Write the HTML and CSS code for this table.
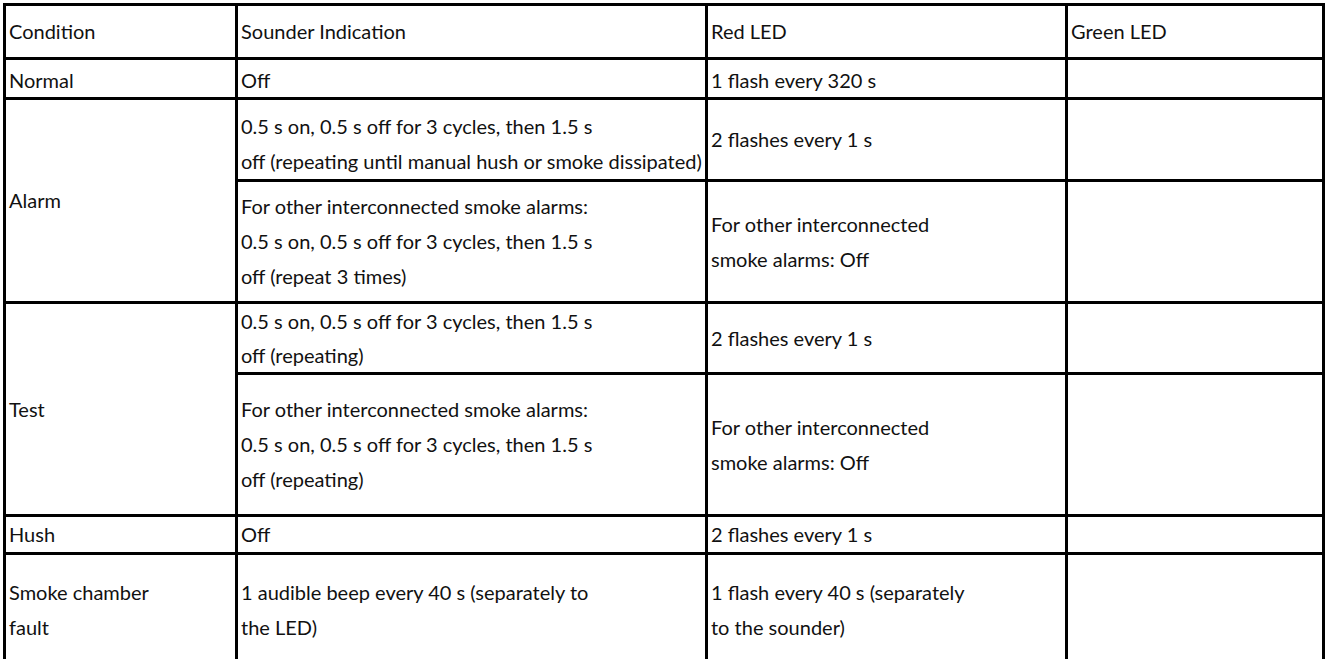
FILE: index.html
```html
<!DOCTYPE html>
<html lang="en">
<head>
<meta charset="utf-8">
<title>Smoke alarm indications</title>
<link rel="stylesheet" href="styles.css">
</head>
<body>
<table class="spec">
  <colgroup>
    <col class="c-cond">
    <col class="c-sound">
    <col class="c-red">
    <col class="c-green">
  </colgroup>
  <tbody>
    <tr class="r-head">
      <td>Condition</td>
      <td>Sounder Indication</td>
      <td>Red LED</td>
      <td>Green LED</td>
    </tr>
    <tr class="r-normal">
      <td>Normal</td>
      <td>Off</td>
      <td>1 flash every 320 s</td>
      <td></td>
    </tr>
    <tr class="r-alarm1">
      <td rowspan="2">Alarm</td>
      <td class="low">0.5 s on, 0.5 s off for 3 cycles, then 1.5 s<br>off (repeating until manual hush or smoke dissipated)</td>
      <td>2 flashes every 1 s</td>
      <td></td>
    </tr>
    <tr class="r-alarm2">
      <td>For other interconnected smoke alarms:<br>0.5 s on, 0.5 s off for 3 cycles, then 1.5 s<br>off (repeat 3 times)</td>
      <td>For other interconnected<br>smoke alarms: Off</td>
      <td></td>
    </tr>
    <tr class="r-test1">
      <td rowspan="2">Test</td>
      <td>0.5 s on, 0.5 s off for 3 cycles, then 1.5 s<br>off (repeating)</td>
      <td>2 flashes every 1 s</td>
      <td></td>
    </tr>
    <tr class="r-test2">
      <td>For other interconnected smoke alarms:<br>0.5 s on, 0.5 s off for 3 cycles, then 1.5 s<br>off (repeating)</td>
      <td>For other interconnected<br>smoke alarms: Off</td>
      <td></td>
    </tr>
    <tr class="r-hush">
      <td>Hush</td>
      <td>Off</td>
      <td>2 flashes every 1 s</td>
      <td></td>
    </tr>
    <tr class="r-fault">
      <td>Smoke chamber<br>fault</td>
      <td>1 audible beep every 40 s (separately to<br>the LED)</td>
      <td>1 flash every 40 s (separately<br>to the sounder)</td>
      <td></td>
    </tr>
  </tbody>
</table>
</body>
</html>
```
FILE: styles.css
```css
html, body {
  margin: 0;
  padding: 0;
  background: #ffffff;
}

body {
  font-family: "Lato", "Liberation Sans", sans-serif;
  font-size: 20px;
  color: #111111;
}

.spec {
  margin: 3px 0 0 3px;
  border-collapse: collapse;
  table-layout: fixed;
  width: 1319px;
}

.c-cond { width: 232px; }
.c-sound { width: 470px; }
.c-red { width: 360px; }
.c-green { width: 257px; }

.spec td {
  border: 3px solid #000000;
  padding: 0 4px 0 3px;
  vertical-align: middle;
  line-height: 35px;
  white-space: nowrap;
  overflow: hidden;
}

.r-head td { height: 51px; }
.r-alarm1 td { height: 79px; }
.r-alarm2 td { height: 119px; }
.r-test2 td { height: 139px; }
.r-hush td { height: 35px; }
.r-fault td { height: 110px; }

.r-normal td {
  padding-top: 4px;
  height: 33px;
  line-height: 33px;
}

.r-test1 td {
  height: 68px;
  line-height: 34px;
}

.r-alarm1 td.low {
  height: 71px;
  padding-top: 8px;
}
```
